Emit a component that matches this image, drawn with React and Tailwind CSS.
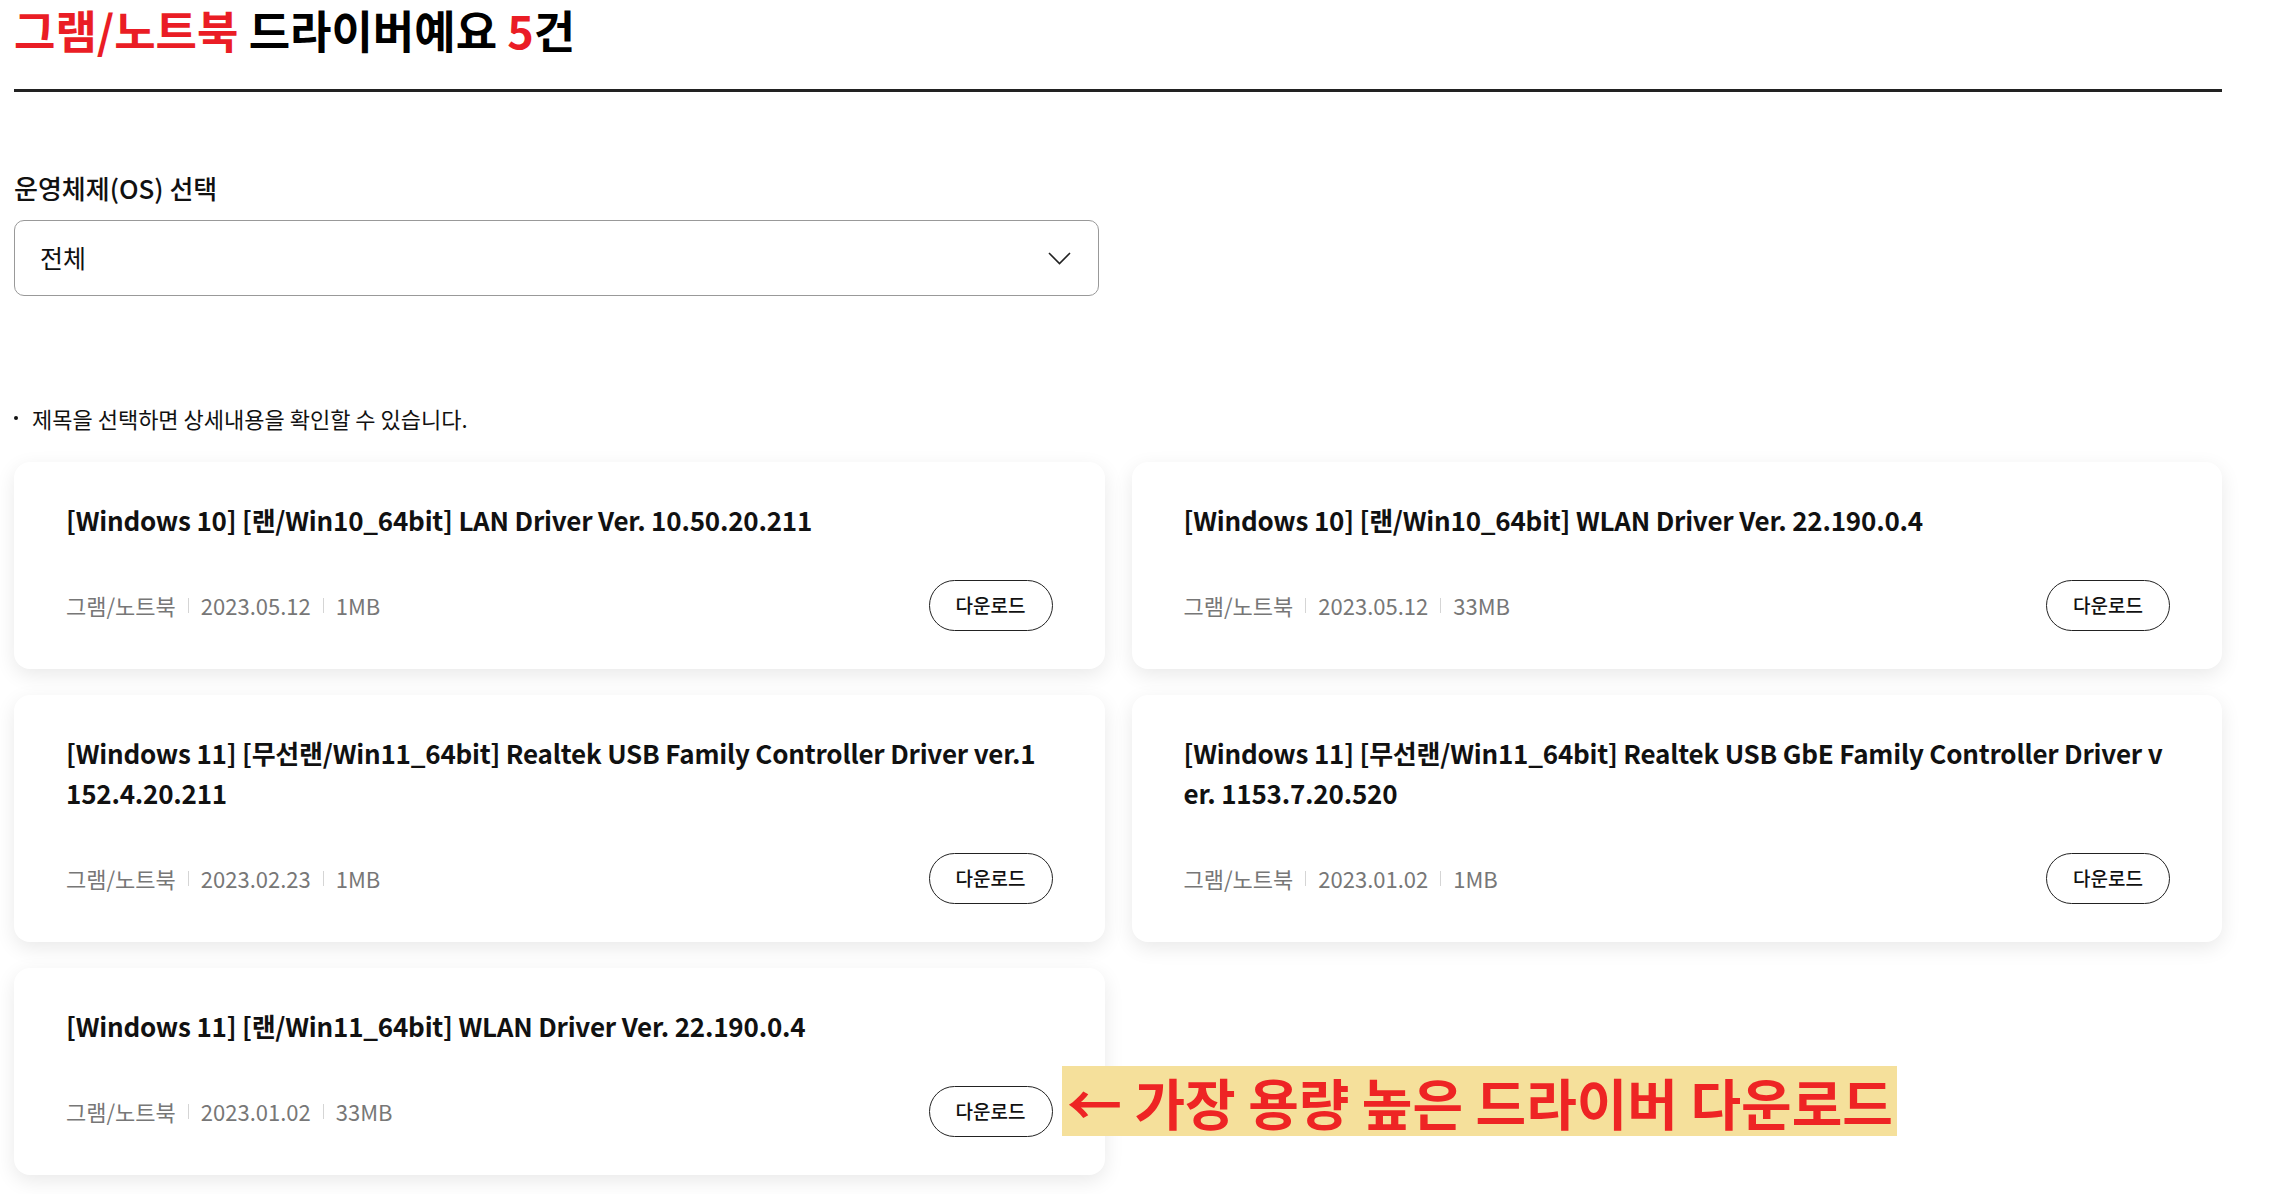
const drivers = [
  {
    title: '[Windows 10] [랜/Win10_64bit] LAN Driver Ver. 10.50.20.211',
    date: '2023.05.12',
    size: '1MB'
  },
  {
    title: '[Windows 10] [랜/Win10_64bit] WLAN Driver Ver. 22.190.0.4',
    date: '2023.05.12',
    size: '33MB'
  },
  {
    // 원본과 같은 위치에서 줄바꿈
    title: '[Windows 11] [무선랜/Win11_64bit] Realtek USB Family Controller Driver ver.1\n152.4.20.211',
    date: '2023.02.23',
    size: '1MB'
  },
  {
    title: '[Windows 11] [무선랜/Win11_64bit] Realtek USB GbE Family Controller Driver ver. 1153.7.20.520',
    date: '2023.01.02',
    size: '1MB'
  },
  {
    title: '[Windows 11] [랜/Win11_64bit] WLAN Driver Ver. 22.190.0.4',
    date: '2023.01.02',
    size: '33MB'
  }
];

const DriverCard = ({ driver }) => (
  <div className="bg-white rounded-[16px] shadow-[0_6px_20px_rgba(0,0,0,0.09)] px-[52px] py-[38px]">
    <h3 className="text-[26px] leading-[40px] font-bold text-[#111] break-all whitespace-pre-line tracking-[-0.2px]">
      {driver.title}
    </h3>
    <div className="mt-[40px] flex items-center justify-between">
      <div className="flex items-center text-[22px] text-[#777]">
        <span>그램/노트북</span>
        <span className="w-px h-[15px] bg-[#d5d5d5] mx-[12px]" />
        <span>{driver.date}</span>
        <span className="w-px h-[15px] bg-[#d5d5d5] mx-[12px]" />
        <span>{driver.size}</span>
      </div>
      <button className="w-[124px] h-[51px] rounded-full border-[1.5px] border-[#222] text-[19px] font-medium text-[#111]">
        다운로드
      </button>
    </div>
  </div>
);

export default function App() {
  return (
    <div className="min-h-screen bg-white text-[#111]" style={{ fontFamily: '"Noto Sans CJK KR", sans-serif' }}>
      <div className="relative w-[2208px] ml-[14px]">
        <div className="border-b-[3px] border-[#222] pb-[29px]">
          <h2 className="text-[45px] leading-[60px] font-bold text-black">
            <span className="text-[#ea1d25]">그램/노트북</span> 드라이버예요 <span className="text-[#ea1d25]">5</span>건
          </h2>
        </div>

        <p className="mt-[78px] text-[26px] leading-[36px] font-medium">운영체제(OS) 선택</p>
        <div className="mt-[14px] w-[1085px] h-[76px] border border-[#999] rounded-[10px] pl-[25px] pr-[27px] flex items-center justify-between">
          <span className="text-[25px]">전체</span>
          <svg width="23" height="13" viewBox="0 0 23 13" fill="none">
            <path d="M1 1l10.5 10.5L22 1" stroke="#222" strokeWidth="1.6" />
          </svg>
        </div>

        <div className="mt-[107px] flex items-center text-[22px] leading-[30px]">
          <span className="w-[4px] h-[4px] rounded-full bg-[#111] mr-[14px]" />
          <span>제목을 선택하면 상세내용을 확인할 수 있습니다.</span>
        </div>

        <div className="mt-[29px] grid grid-cols-2 gap-x-[27px] gap-y-[26px]">
          {drivers.map((d, i) => (
            <DriverCard key={i} driver={d} />
          ))}
        </div>

        <div className="absolute left-[1048px] top-[1066px] h-[70px] bg-[#f5e09b] pl-[5px] pr-[4px] text-[55px] leading-[70px] font-bold text-[#ee2424] whitespace-nowrap">
          ← 가장 용량 높은 드라이버 다운로드
        </div>
      </div>
    </div>
  );
}
